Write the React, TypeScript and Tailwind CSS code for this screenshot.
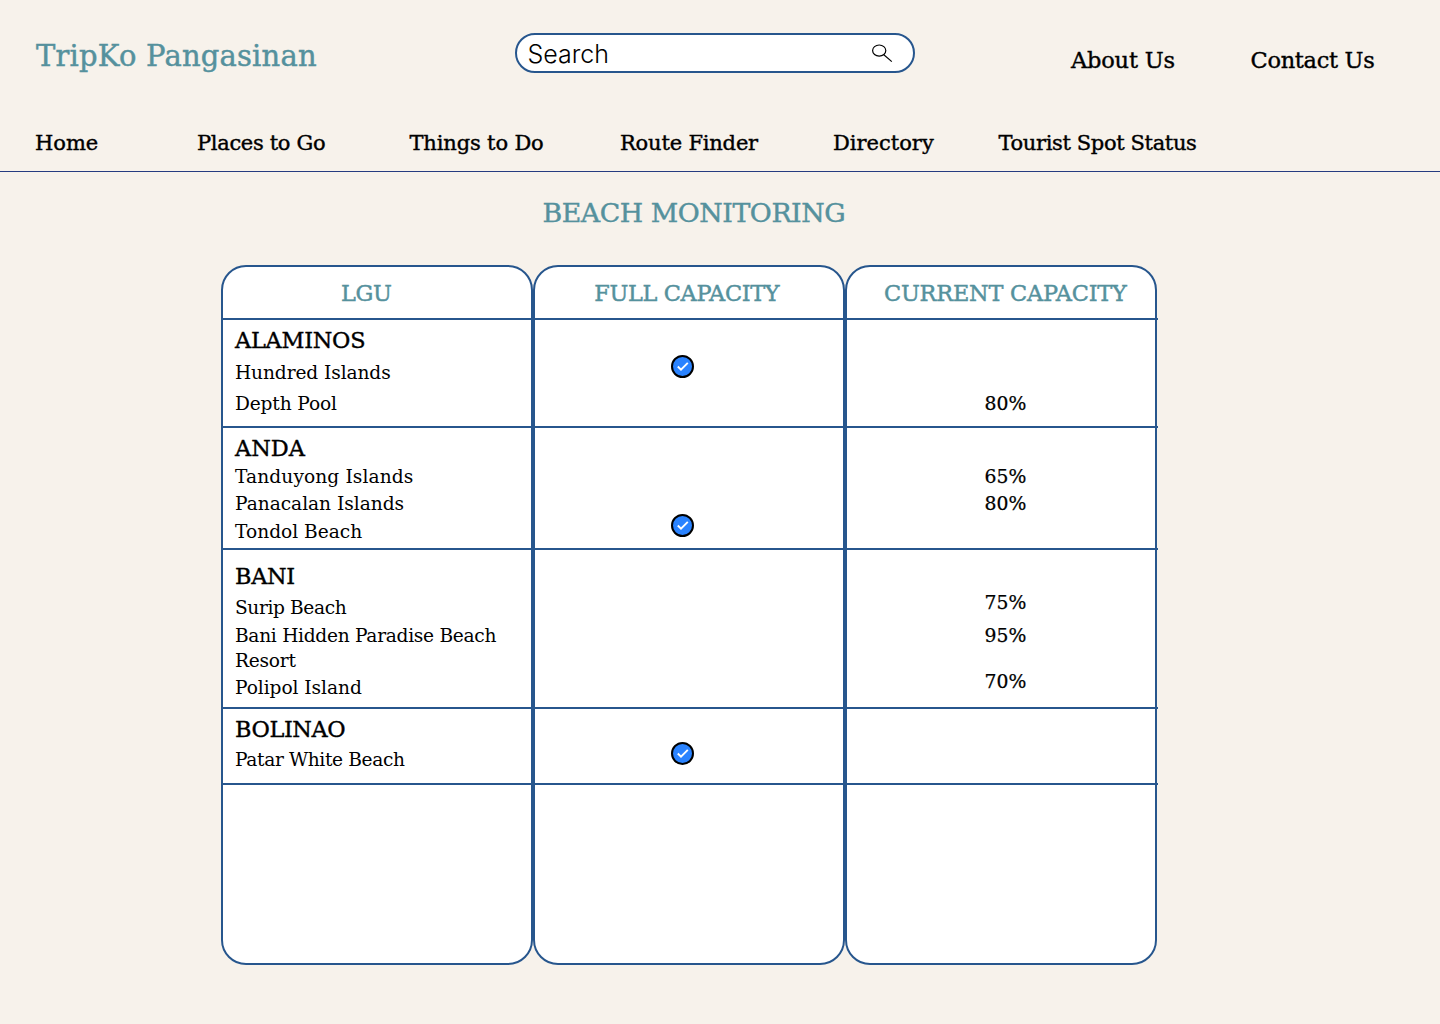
const NAV = [
  { label: "Home", cls: "w-[162px]" },
  { label: "Places to Go", cls: "w-[212.5px] tracking-[-0.33px]" },
  { label: "Things to Do", cls: "w-[210.5px] tracking-[-0.15px]" },
  { label: "Route Finder", cls: "w-[213px] tracking-[-0.19px]" },
  { label: "Directory", cls: "w-[165.5px]" },
  { label: "Tourist Spot Status", cls: "tracking-[-0.36px]" },
];

type Line = { text: string; cls: string };

const ROWS: {
  height: string;
  name: Line;
  spots: Line[];
  check?: string;
  levels: Line[];
}[] = [
  {
    height: "h-[108px]",
    name: { text: "ALAMINOS", cls: "tracking-[-0.25px]" },
    spots: [
      { text: "Hundred Islands", cls: "mt-[7px] tracking-[-0.1px]" },
      { text: "Depth Pool", cls: "mt-[7px] tracking-[-0.15px]" },
    ],
    check: "mt-[35px]",
    levels: [{ text: "80%", cls: "mt-[72px]" }],
  },
  {
    height: "h-[122px]",
    name: { text: "ANDA", cls: "" },
    spots: [
      { text: "Tanduyong Islands", cls: "mt-[3px] tracking-[0.1px]" },
      { text: "Panacalan Islands", cls: "mt-[3px] tracking-[-0.03px]" },
      { text: "Tondol Beach", cls: "mt-[4px]" },
    ],
    check: "mt-[86px]",
    levels: [
      { text: "65%", cls: "mt-[37px]" },
      { text: "80%", cls: "mt-[3px]" },
    ],
  },
  {
    height: "h-[159px]",
    name: { text: "BANI", cls: "mt-[6px] tracking-[-0.3px]" },
    spots: [
      { text: "Surip Beach", cls: "mt-[6px] tracking-[-0.38px]" },
      { text: "Bani Hidden Paradise Beach", cls: "mt-[4px] tracking-[-0.29px]" },
      { text: "Resort", cls: "mt-[1px] tracking-[-0.25px]" },
      { text: "Polipol Island", cls: "mt-[3px] tracking-[-0.06px]" },
    ],
    levels: [
      { text: "75%", cls: "mt-[41px]" },
      { text: "95%", cls: "mt-[9px]" },
      { text: "70%", cls: "mt-[22px]" },
    ],
  },
  {
    height: "h-[76px]",
    name: { text: "BOLINAO", cls: "tracking-[-0.4px]" },
    spots: [{ text: "Patar White Beach", cls: "mt-[5px] tracking-[-0.36px]" }],
    check: "mt-[33px]",
    levels: [],
  },
];

const COLUMN = "h-[700px] w-[312px] rounded-[25px] border-2 border-[#27568d] bg-white";
const HEADER =
  "flex h-[53px] border-b-2 border-[#27568d] pt-[12px] text-[22.4px] leading-[28px] text-[#55919d] [-webkit-text-stroke:0.45px_#55919d]";
const CELL = "flex flex-col items-start border-b-2 border-[#27568d]";

function CheckBadge() {
  return (
    <svg width="23" height="23" viewBox="0 0 23 23" fill="none">
      <circle cx="11.5" cy="11.5" r="10.5" fill="#2a83ff" stroke="#000" strokeWidth="2" />
      <path d="M6.8 11.5L10 14.7L16.8 7.9" stroke="#fff" strokeWidth="1.9" />
    </svg>
  );
}

function SearchIcon() {
  return (
    <svg width="22" height="20" viewBox="0 0 22 20" fill="none" stroke="#000" strokeWidth="1.2">
      <ellipse cx="8.2" cy="7.6" rx="6.6" ry="5.6" />
      <path d="M12.8 11.7L20.8 18.6" />
    </svg>
  );
}

export default function App() {
  return (
    <div className="flex h-[1024px] w-[1440px] flex-col overflow-hidden whitespace-nowrap bg-[#f7f2eb] font-['DejaVu_Serif',serif] text-black">
      <header className="flex h-[172px] shrink-0 flex-col border-b border-[#263c80]">
        <div className="flex h-[125px] items-start">
          <h1 className="ml-[36px] mt-[36px] w-[479px] text-[29px] leading-[41px] tracking-[0.2px] text-[#55919d] [-webkit-text-stroke:0.45px_#55919d]">
            TripKo Pangasinan
          </h1>
          <div className="mt-[33px] flex h-[40px] w-[400px] items-center rounded-full border-2 border-[#27568d] bg-white pl-[10.5px]">
            <span className="w-[343.5px] pt-[2px] font-['Inter',sans-serif] text-[25px] font-light leading-[36px]">
              Search
            </span>
            <SearchIcon />
          </div>
          <nav className="mt-[46px] flex text-[22.5px] leading-[28px] [-webkit-text-stroke:0.4px_#000]">
            <a className="ml-[156px] w-[179.5px] tracking-[-0.2px]">About Us</a>
            <a className="tracking-[-0.3px]">Contact Us</a>
          </nav>
        </div>
        <nav className="ml-[35px] mt-[4px] flex text-[21px] leading-[28px] [-webkit-text-stroke:0.4px_#000]">
          {NAV.map((item) => (
            <a key={item.label} className={item.cls}>
              {item.label}
            </a>
          ))}
        </nav>
      </header>

      <h2 className="ml-[542.5px] mt-[25px] text-[26.8px] leading-[32px] tracking-[-0.45px] text-[#55919d] [-webkit-text-stroke:0.45px_#55919d]">
        BEACH MONITORING
      </h2>

      <main className="ml-[221px] mt-[36px] flex">
        <section className={COLUMN}>
          <div className={HEADER}>
            <span className="ml-[118px] tracking-[-0.4px]">LGU</span>
          </div>
          {ROWS.map((row) => (
            <div key={row.name.text} className={`${CELL} ${row.height} pl-[12px] pt-[6px]`}>
              <h3 className={`text-[22.4px] leading-[28px] [-webkit-text-stroke:0.4px_#000] ${row.name.cls}`}>
                {row.name.text}
              </h3>
              {row.spots.map((spot) => (
                <p key={spot.text} className={`text-[18.6px] leading-[24px] ${spot.cls}`}>
                  {spot.text}
                </p>
              ))}
            </div>
          ))}
        </section>

        <section className={COLUMN}>
          <div className={HEADER}>
            <span className="ml-[59.3px] tracking-[-0.35px]">FULL CAPACITY</span>
          </div>
          {ROWS.map((row) => (
            <div key={row.name.text} className={`${CELL} ${row.height} pl-[136px]`}>
              {row.check && (
                <div className={row.check}>
                  <CheckBadge />
                </div>
              )}
            </div>
          ))}
        </section>

        <section className={COLUMN}>
          <div className={`${HEADER} -mr-[3px]`}>
            <span className="ml-[37px] tracking-[-0.2px]">CURRENT CAPACITY</span>
          </div>
          {ROWS.map((row) => (
            <div key={row.name.text} className={`${CELL} ${row.height} -mr-[3px] pl-[137.5px]`}>
              {row.levels.map((level) => (
                <p
                  key={level.text}
                  className={`text-[18.8px] leading-[24px] [-webkit-text-stroke:0.25px_#000] ${level.cls}`}
                >
                  {level.text}
                </p>
              ))}
            </div>
          ))}
        </section>
      </main>
    </div>
  );
}
